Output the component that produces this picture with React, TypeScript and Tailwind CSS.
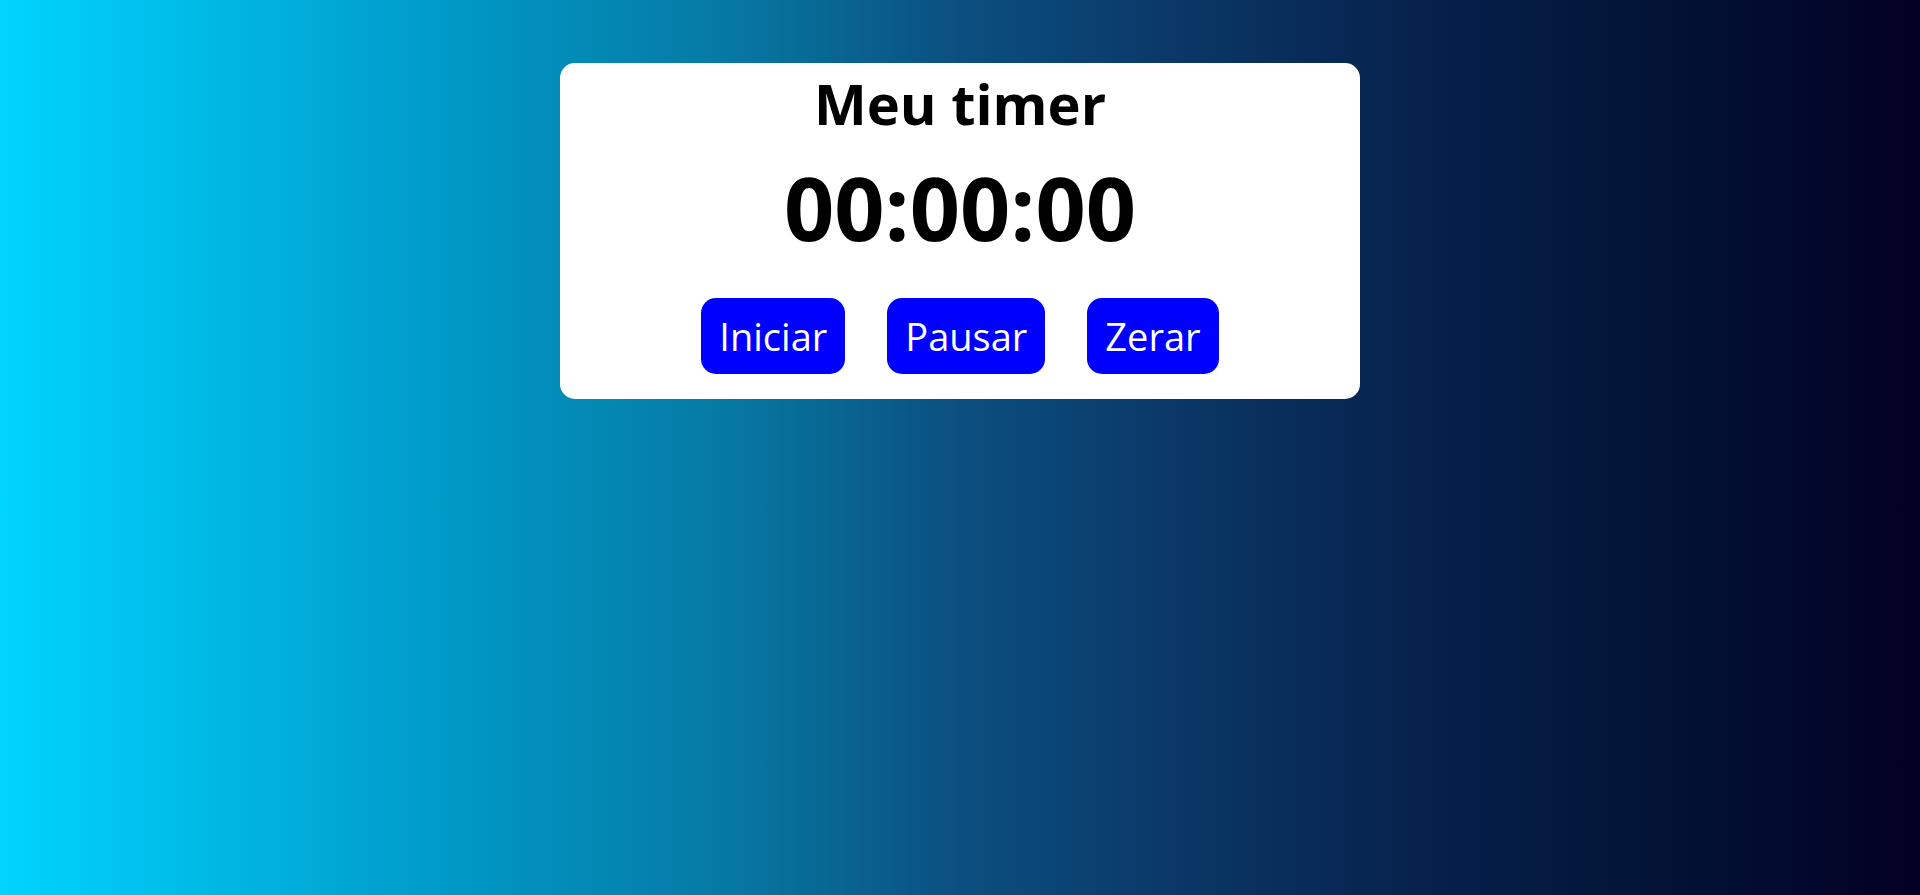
import { useEffect, useRef, useState } from 'react';

function pad(n: number) {
  return String(n).padStart(2, '0');
}

export default function App() {
  const [seconds, setSeconds] = useState(0);
  const timerRef = useRef<number | null>(null);

  const start = () => {
    if (timerRef.current !== null) return;
    timerRef.current = window.setInterval(() => setSeconds((s) => s + 1), 1000);
  };
  const pause = () => {
    if (timerRef.current !== null) window.clearInterval(timerRef.current);
    timerRef.current = null;
  };
  const reset = () => {
    pause();
    setSeconds(0);
  };

  useEffect(() => () => pause(), []);

  const h = Math.floor(seconds / 3600);
  const m = Math.floor((seconds % 3600) / 60);
  const s = seconds % 60;

  return (
    <div className="min-h-screen w-full flex justify-center pt-[63px] font-['Open_Sans',sans-serif] bg-[linear-gradient(90deg,#00d4ff_0%,#0095c3_25%,#067aa4_37.5%,#0b4f80_50%,#0a3564_62.5%,#06204a_75%,#021234_87.5%,#020024_100%)]">
      <div className="w-[800px] h-fit bg-white rounded-[15px] flex flex-col items-center pt-[2px] pb-[25px]">
        {/* Title */}
        <h1 className="text-[56px] leading-[76px] font-bold text-black">Meu timer</h1>

        {/* Clock */}
        <div className="mt-[6px] text-[88px] leading-[120px] font-bold text-black">
          {pad(h)}:{pad(m)}:{pad(s)}
        </div>

        {/* Controls */}
        <div className="mt-[31px] flex gap-[42px]">
          <button onClick={start} className="bg-[#0000ff] text-white text-[38px] leading-[56px] px-[18px] py-[10px] rounded-[15px]">
            Iniciar
          </button>
          <button onClick={pause} className="bg-[#0000ff] text-white text-[38px] leading-[56px] px-[18px] py-[10px] rounded-[15px]">
            Pausar
          </button>
          <button onClick={reset} className="bg-[#0000ff] text-white text-[38px] leading-[56px] px-[18px] py-[10px] rounded-[15px]">
            Zerar
          </button>
        </div>
      </div>
    </div>
  );
}
